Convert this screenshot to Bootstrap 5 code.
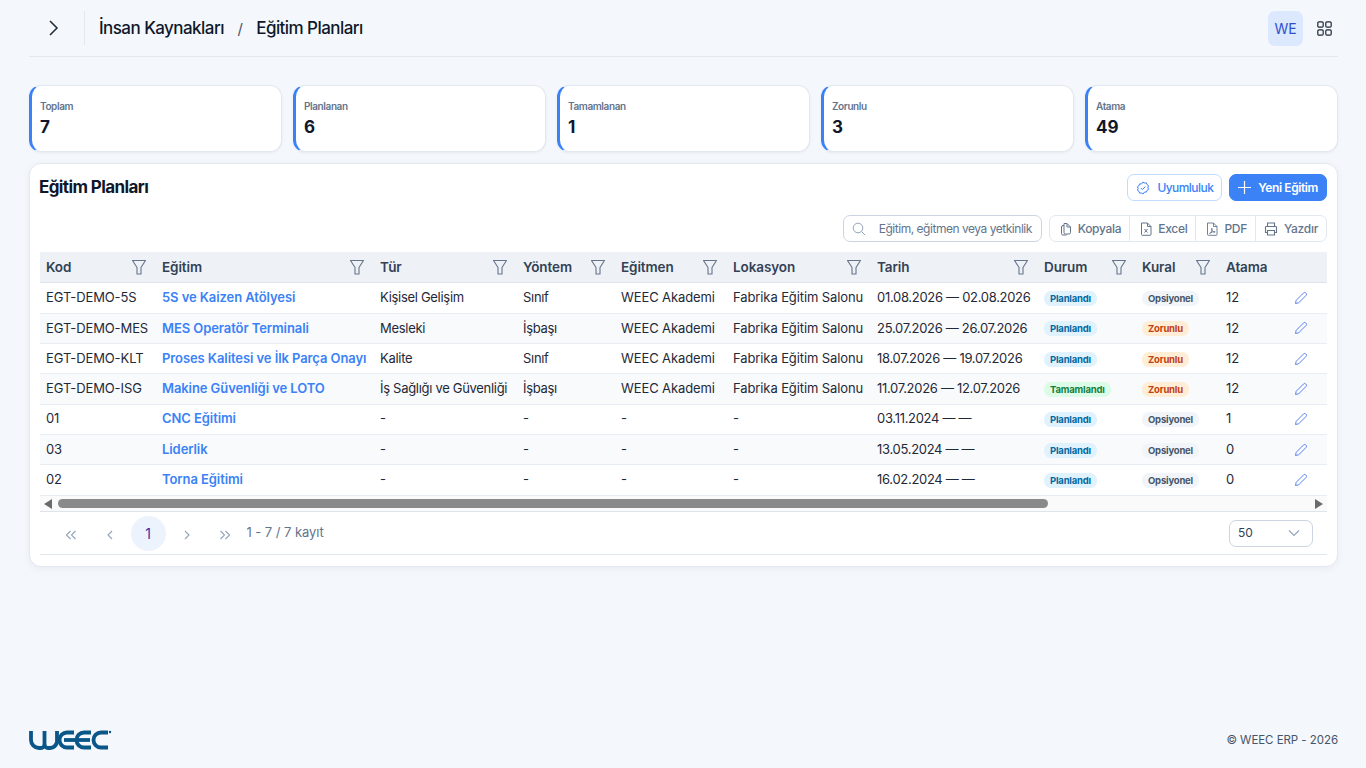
<!DOCTYPE html>
<html lang="tr">
<head>
  <meta charset="UTF-8">
  <title>Eğitim Planları</title>
  <meta name="viewport" content="width=device-width, initial-scale=1">
  <link href="https://cdn.jsdelivr.net/npm/bootstrap@5.3.0/dist/css/bootstrap.min.css" rel="stylesheet">
  <style>
    body { background: #f4f7fc; font-family: Inter, "Liberation Sans", sans-serif; color: #1f2937; font-size: 13px; letter-spacing: -.1px; }
    .page-wrap { padding: 0 28px 0 29px; min-height: 768px; }
    .top-strip { height: 57px; border-bottom: 1px solid #e2e8f0; }
    .toggle-box { width: 56px; height: 34px; border-right: 1px solid #e2e8f0; margin-right: 14px; padding-right: 8px; color: #1f2937; }
    .crumb { font-size: 17px; font-weight: 500; color: #0f172a; letter-spacing: -.55px; position: relative; top: 1px; }
    .crumb-sep { margin: 0 13.5px; font-size: 15px; color: #475569; position: relative; top: 1px; }
    .user-box { width: 35px; height: 35px; border-radius: 7px; background: #dbe8fd; color: #2f4fd0; font-size: 14px; font-weight: 400; }
    .apps-box { width: 15px; margin: 0 6px 0 14px; color: #1f2937; }
    .stat-row { margin-top: 28px; gap: 11px; }
    .stat-box { flex: 1 1 0; height: 67px; background: #fff; border: 1px solid #e2e8f0; border-left: 3px solid #3b82f6; border-radius: 12px; padding: 14px 8px; box-shadow: 0 1px 3px rgba(15, 23, 42, .06); }
    .stat-name { font-size: 10px; font-weight: 600; color: #64748b; line-height: 13px; letter-spacing: -.4px; }
    .stat-num { font-size: 17px; font-weight: 700; color: #0f172a; line-height: 24px; letter-spacing: 0; margin-top: 2px; }
    .main-box { margin-top: 11px; background: #fff; border: 1px solid #e2e8f0; border-radius: 12px; padding: 10px 10px 11px; box-shadow: 0 2px 8px rgba(15, 23, 42, .05); }
    .main-title { font-size: 17px; font-weight: 700; color: #0f172a; letter-spacing: -.6px; margin: 0 0 0 -1px; }
    .btn-soft, .btn-fill { height: 27px; border-radius: 7px; font-size: 12px; padding: 0 8px; gap: 7px; }
    .btn-soft { background: #fff; border: 1px solid #bfdbfe; color: #3b82f6; font-weight: 500; letter-spacing: -.55px; }
    .btn-fill { background: #3b82f6; border: 1px solid #3b82f6; color: #fff; font-weight: 600; letter-spacing: -.4px; }
    .head-actions { gap: 7px; }
    .tools-row { margin-top: 14px; gap: 7px; }
    .search-box { width: 199px; height: 27px; border: 1px solid #cbd5e1; border-radius: 7px; padding: 0 8px; gap: 13px; font-size: 12px; color: #64748b; letter-spacing: -.47px; white-space: nowrap; overflow: hidden; }
    .tool-group { height: 27px; border: 1px solid #e2e8f0; border-radius: 7px; }
    .tool-btn { height: 100%; padding: 0 8px 0 10px; gap: 6px; font-size: 12px; font-weight: 500; color: #64748b; border-right: 1px solid #e2e8f0; letter-spacing: -.3px; background: none; border-top: 0; border-bottom: 0; border-left: 0; }
    .tool-btn:last-child { border-right: 0; padding-left: 8px; }
    .plan-table { margin: 10px 0 0; width: 1287px; table-layout: fixed; border-collapse: collapse; font-size: 13px; }
    .plan-table col:nth-child(1) { width: 116px; }
    .plan-table col:nth-child(2) { width: 218px; }
    .plan-table col:nth-child(3) { width: 143px; }
    .plan-table col:nth-child(4) { width: 98px; }
    .plan-table col:nth-child(5) { width: 112px; }
    .plan-table col:nth-child(6) { width: 144px; }
    .plan-table col:nth-child(7) { width: 167px; }
    .plan-table col:nth-child(8) { width: 98px; }
    .plan-table col:nth-child(9) { width: 84px; }
    .plan-table col:nth-child(10) { width: 60px; }
    .plan-table col:nth-child(11) { width: 47px; }
    .plan-table th { background: #eef2f7; height: 30.78px; padding: 0 9px 0 6px; font-size: 13.5px; font-weight: 600; color: #334155; border-bottom: 1px solid #dde4ee; letter-spacing: -.1px; white-space: nowrap; }
    .plan-table td { height: 30.33px; padding: 0 6px; color: #1f2937; border-bottom: 1px solid #e8edf3; background: #fff; white-space: nowrap; vertical-align: middle; }
    .plan-table tbody tr:nth-child(even) td { background: #f8fafc; }
    .plan-table a { color: #3b82f6; font-weight: 600; text-decoration: none; letter-spacing: -.08px; }
    .plan-table td.date-cell, .plan-table td.tight-cell { letter-spacing: -.3px; }
    .filter-ico { color: #64748b; }
    .tag { display: inline-block; font-size: 9.5px; font-weight: 700; line-height: 15px; padding: 0 6px; border-radius: 7px; letter-spacing: -.2px; vertical-align: middle; }
    .tag-plan { background: #e0f2fe; color: #0369a1; }
    .tag-done { background: #dcfce7; color: #15803d; }
    .tag-opt { background: #f1f5f9; color: #475569; }
    .tag-req { background: #ffedd5; color: #c2410c; }
    .edit-ico { color: #5b82f0; display: block; margin-left: auto; margin-right: 12px; }
    .scroll-strip { height: 16px; width: 1287px; margin-top: .6px; background: #fafafa; border-bottom: 1px solid #dde4ee; padding: 0 4px; }
    .scroll-thumb { height: 9px; width: 990px; background: #8a8a8a; border-radius: 5px; margin-left: 6px; }
    .arrow-l, .arrow-r { width: 0; height: 0; border-top: 5px solid transparent; border-bottom: 5px solid transparent; }
    .arrow-l { border-right: 8px solid #6b6b6b; }
    .arrow-r { border-left: 8px solid #6b6b6b; margin-left: auto; }
    .pager-row { width: 1287px; height: 43px; border-bottom: 1px solid #e2e8f0; padding: 0 14px 0 13.5px; }
    .pager-btn { width: 35px; height: 35px; margin-right: 3.6px; border-radius: 50%; color: #94a3b8; background: none; border: 0; font-size: 14px; padding: 0; }
    .pager-btn.is-on { background: #edf3fd; color: #3730a3; }
    .pager-info { color: #64748b; font-size: 13px; letter-spacing: -.05px; }
    .size-box { width: 84px; height: 27px; border: 1px solid #cbd5e1; border-radius: 7px; padding: 0 12px 0 8px; font-size: 12px; color: #334155; }
    .foot-row { margin-top: auto; height: 47px; padding-bottom: 7px; font-size: 11.5px; color: #475569; letter-spacing: -.05px; }
    .foot-logo { margin: 0 0 2px -1px; }
  </style>
</head>
<body>
  <svg width="0" height="0" class="position-absolute">
    <symbol id="i-filter" viewBox="0 0 16 16"><path d="M1.5 1.5h13L10 8.5V15H6V8.5z" fill="none" stroke="currentColor" stroke-width="1.1" stroke-linejoin="round"/></symbol>
    <symbol id="i-edit" viewBox="0 0 16 16"><path d="M2.5 13.5l.7-3.2 7.4-7.4a1.5 1.5 0 0 1 2.1 0l.4.4a1.5 1.5 0 0 1 0 2.1l-7.400 7.400z" fill="none" stroke="currentColor" stroke-width="1" stroke-linejoin="round"/></symbol>
    <symbol id="i-first" viewBox="0 0 14 14"><path d="M6.5 3 2.5 7l4 4M11.5 3l-4 4 4 4" fill="none" stroke="currentColor" stroke-width="1.1"/></symbol>
    <symbol id="i-prev" viewBox="0 0 14 14"><path d="M9 3 5 7l4 4" fill="none" stroke="currentColor" stroke-width="1.1"/></symbol>
    <symbol id="i-next" viewBox="0 0 14 14"><path d="m5 3 4 4-4 4" fill="none" stroke="currentColor" stroke-width="1.1"/></symbol>
    <symbol id="i-last" viewBox="0 0 14 14"><path d="m2.5 3 4 4-4 4M7.5 3l4 4-4 4" fill="none" stroke="currentColor" stroke-width="1.1"/></symbol>
  </svg>

  <div class="page-wrap d-flex flex-column">
    <header class="top-strip d-flex align-items-center">
      <div class="toggle-box d-flex align-items-center justify-content-center">
        <svg width="16" height="16" viewBox="0 0 16 16"><path d="m5 1 7 7-7 7" fill="none" stroke="#1f2937" stroke-width="1.5"/></svg>
      </div>
      <span class="crumb">İnsan Kaynakları</span>
      <span class="crumb-sep">/</span>
      <span class="crumb">Eğitim Planları</span>
      <div class="ms-auto d-flex align-items-center">
        <div class="user-box d-flex align-items-center justify-content-center">WE</div>
        <div class="apps-box">
          <svg width="15" height="15" viewBox="0 0 15 15" class="d-block"><g fill="none" stroke="#1f2937" stroke-width="1.2"><rect x=".8" y=".8" width="5.4" height="5.4" rx="1.2"/><rect x="8.8" y=".8" width="5.4" height="5.4" rx="1.2"/><rect x=".8" y="8.8" width="5.4" height="5.4" rx="1.2"/><rect x="8.8" y="8.8" width="5.4" height="5.4" rx="1.2"/></g></svg>
        </div>
      </div>
    </header>

    <section class="stat-row d-flex">
      <div class="stat-box"><div class="stat-name">Toplam</div><div class="stat-num">7</div></div>
      <div class="stat-box"><div class="stat-name">Planlanan</div><div class="stat-num">6</div></div>
      <div class="stat-box"><div class="stat-name">Tamamlanan</div><div class="stat-num">1</div></div>
      <div class="stat-box"><div class="stat-name">Zorunlu</div><div class="stat-num">3</div></div>
      <div class="stat-box"><div class="stat-name">Atama</div><div class="stat-num">49</div></div>
    </section>

    <main class="main-box">
      <div class="d-flex align-items-center justify-content-between">
        <h1 class="main-title">Eğitim Planları</h1>
        <div class="head-actions d-flex">
          <button class="btn-soft d-inline-flex align-items-center" type="button">
            <svg width="14" height="14" viewBox="0 0 14 14"><path d="M7 1l1.5 1 1.9-.1.6 1.7 1.5 1.1-.6 1.8.6 1.8-1.5 1.1-.6 1.7-1.9-.1L7 13l-1.500-1-1.900.1L3 10.400 1.500 9.300l.6-1.800-.6-1.800L3 4.600l.6-1.700 1.900.1z" fill="none" stroke="#3b82f6" stroke-width="1"/><path d="m4.800 7 1.600 1.600 2.800-3" fill="none" stroke="#3b82f6" stroke-width="1"/></svg>
            Uyumluluk
          </button>
          <button class="btn-fill d-inline-flex align-items-center" type="button">
            <svg width="13" height="13" viewBox="0 0 13 13"><path d="M6.5 0v13M0 6.5h13" stroke="#fff" stroke-width="1.2"/></svg>
            Yeni Eğitim
          </button>
        </div>
      </div>

      <div class="tools-row d-flex justify-content-end">
        <div class="search-box d-flex align-items-center">
          <svg width="14" height="14" viewBox="0 0 14 14" class="flex-shrink-0"><circle cx="6" cy="6" r="4.8" fill="none" stroke="#94a3b8" stroke-width="1"/><path d="m9.5 9.5 3.5 3.5" stroke="#94a3b8" stroke-width="1"/></svg>
          <span>Eğitim, eğitmen veya yetkinlik</span>
        </div>
        <div class="tool-group d-flex">
          <button class="tool-btn d-flex align-items-center" type="button">
            <svg width="12" height="14" viewBox="0 0 12 14"><path d="M4 1.5h3l3.5 3.5v5.500a1.500 1.500 0 0 1-1.500 1.500H5.500A1.500 1.500 0 0 1 4 10.500zM7 1.500V5h3.500M4 3.500H3A1.500 1.500 0 0 0 1.500 5v6.500A1.500 1.500 0 0 0 3 13h3.500" fill="none" stroke="#64748b" stroke-width="1"/></svg>
            Kopyala
          </button>
          <button class="tool-btn d-flex align-items-center" type="button">
            <svg width="12" height="14" viewBox="0 0 12 14"><path d="M1.5 1h6L11 4.500v8a.8.800 0 0 1-.8.800H2.300a.8.800 0 0 1-.8-.800zM7.500 1v3.500H11M4.500 7l3 3.500M7.500 7l-3 3.500" fill="none" stroke="#64748b" stroke-width="1"/></svg>
            Excel
          </button>
          <button class="tool-btn d-flex align-items-center" type="button">
            <svg width="12" height="14" viewBox="0 0 12 14"><path d="M1.5 1h6L11 4.500v8a.8.800 0 0 1-.8.800H2.300a.8.800 0 0 1-.8-.800zM7.500 1v3.500H11M3.500 11.500c1.500-.8 2.800-3 2.600-4.800-.1-.8-.8-.5-.6.300.4 1.800 1.700 3.200 3.200 3.300.7 0 .6-.8-.1-.8-1.500 0-3.400.8-5.100 2z" fill="none" stroke="#64748b" stroke-width=".9"/></svg>
            PDF
          </button>
          <button class="tool-btn d-flex align-items-center" type="button">
            <svg width="14" height="14" viewBox="0 0 14 14"><path d="M3.5 4.500V1h7v3.500M3.500 10.500H1.500V5.300a.8.800 0 0 1 .8-.800h9.400a.8.800 0 0 1 .8.800v5.200h-2M3.500 8.500h7V13h-7z" fill="none" stroke="#64748b" stroke-width="1.1"/></svg>
            Yazdır
          </button>
        </div>
      </div>

      <table class="plan-table">
        <colgroup>
          <col><col><col><col><col><col><col><col><col><col><col>
        </colgroup>
        <thead>
          <tr>
            <th><div class="d-flex justify-content-between align-items-center">Kod<svg class="filter-ico" width="16" height="16"><use href="#i-filter"/></svg></div></th>
            <th><div class="d-flex justify-content-between align-items-center">Eğitim<svg class="filter-ico" width="16" height="16"><use href="#i-filter"/></svg></div></th>
            <th><div class="d-flex justify-content-between align-items-center">Tür<svg class="filter-ico" width="16" height="16"><use href="#i-filter"/></svg></div></th>
            <th><div class="d-flex justify-content-between align-items-center">Yöntem<svg class="filter-ico" width="16" height="16"><use href="#i-filter"/></svg></div></th>
            <th><div class="d-flex justify-content-between align-items-center">Eğitmen<svg class="filter-ico" width="16" height="16"><use href="#i-filter"/></svg></div></th>
            <th><div class="d-flex justify-content-between align-items-center">Lokasyon<svg class="filter-ico" width="16" height="16"><use href="#i-filter"/></svg></div></th>
            <th><div class="d-flex justify-content-between align-items-center">Tarih<svg class="filter-ico" width="16" height="16"><use href="#i-filter"/></svg></div></th>
            <th><div class="d-flex justify-content-between align-items-center">Durum<svg class="filter-ico" width="16" height="16"><use href="#i-filter"/></svg></div></th>
            <th><div class="d-flex justify-content-between align-items-center">Kural<svg class="filter-ico" width="16" height="16"><use href="#i-filter"/></svg></div></th>
            <th>Atama</th>
            <th></th>
          </tr>
        </thead>
        <tbody>
          <tr><td>EGT-DEMO-5S</td><td><a href="#">5S ve Kaizen Atölyesi</a></td><td class="tight-cell">Kişisel Gelişim</td><td class="tight-cell">Sınıf</td><td>WEEC Akademi</td><td>Fabrika Eğitim Salonu</td><td class="date-cell">01.08.2026 — 02.08.2026</td><td><span class="tag tag-plan">Planlandı</span></td><td><span class="tag tag-opt">Opsiyonel</span></td><td>12</td><td><svg class="edit-ico" width="16" height="16"><use href="#i-edit"/></svg></td></tr>
          <tr><td>EGT-DEMO-MES</td><td><a href="#">MES Operatör Terminali</a></td><td class="tight-cell">Mesleki</td><td class="tight-cell">İşbaşı</td><td>WEEC Akademi</td><td>Fabrika Eğitim Salonu</td><td class="date-cell">25.07.2026 — 26.07.2026</td><td><span class="tag tag-plan">Planlandı</span></td><td><span class="tag tag-req">Zorunlu</span></td><td>12</td><td><svg class="edit-ico" width="16" height="16"><use href="#i-edit"/></svg></td></tr>
          <tr><td>EGT-DEMO-KLT</td><td><a href="#">Proses Kalitesi ve İlk Parça Onayı</a></td><td class="tight-cell">Kalite</td><td class="tight-cell">Sınıf</td><td>WEEC Akademi</td><td>Fabrika Eğitim Salonu</td><td class="date-cell">18.07.2026 — 19.07.2026</td><td><span class="tag tag-plan">Planlandı</span></td><td><span class="tag tag-req">Zorunlu</span></td><td>12</td><td><svg class="edit-ico" width="16" height="16"><use href="#i-edit"/></svg></td></tr>
          <tr><td>EGT-DEMO-ISG</td><td><a href="#">Makine Güvenliği ve LOTO</a></td><td class="tight-cell">İş Sağlığı ve Güvenliği</td><td class="tight-cell">İşbaşı</td><td>WEEC Akademi</td><td>Fabrika Eğitim Salonu</td><td class="date-cell">11.07.2026 — 12.07.2026</td><td><span class="tag tag-done">Tamamlandı</span></td><td><span class="tag tag-req">Zorunlu</span></td><td>12</td><td><svg class="edit-ico" width="16" height="16"><use href="#i-edit"/></svg></td></tr>
          <tr><td>01</td><td><a href="#">CNC Eğitimi</a></td><td>-</td><td>-</td><td>-</td><td>-</td><td class="date-cell">03.11.2024 — —</td><td><span class="tag tag-plan">Planlandı</span></td><td><span class="tag tag-opt">Opsiyonel</span></td><td>1</td><td><svg class="edit-ico" width="16" height="16"><use href="#i-edit"/></svg></td></tr>
          <tr><td>03</td><td><a href="#">Liderlik</a></td><td>-</td><td>-</td><td>-</td><td>-</td><td class="date-cell">13.05.2024 — —</td><td><span class="tag tag-plan">Planlandı</span></td><td><span class="tag tag-opt">Opsiyonel</span></td><td>0</td><td><svg class="edit-ico" width="16" height="16"><use href="#i-edit"/></svg></td></tr>
          <tr><td>02</td><td><a href="#">Torna Eğitimi</a></td><td>-</td><td>-</td><td>-</td><td>-</td><td class="date-cell">16.02.2024 — —</td><td><span class="tag tag-plan">Planlandı</span></td><td><span class="tag tag-opt">Opsiyonel</span></td><td>0</td><td><svg class="edit-ico" width="16" height="16"><use href="#i-edit"/></svg></td></tr>
        </tbody>
      </table>

      <div class="scroll-strip d-flex align-items-center">
        <div class="arrow-l"></div>
        <div class="scroll-thumb"></div>
        <div class="arrow-r"></div>
      </div>

      <div class="pager-row d-flex align-items-center">
        <button class="pager-btn" type="button"><svg width="14" height="14"><use href="#i-first"/></svg></button>
        <button class="pager-btn" type="button"><svg width="14" height="14"><use href="#i-prev"/></svg></button>
        <button class="pager-btn is-on" type="button">1</button>
        <button class="pager-btn" type="button"><svg width="14" height="14"><use href="#i-next"/></svg></button>
        <button class="pager-btn" type="button"><svg width="14" height="14"><use href="#i-last"/></svg></button>
        <span class="pager-info">1 - 7 / 7 kayıt</span>
        <div class="size-box ms-auto d-flex align-items-center justify-content-between">
          50
          <svg width="12" height="12" viewBox="0 0 12 12"><path d="m1 3.5 5 5 5-5" fill="none" stroke="#94a3b8" stroke-width="1.1"/></svg>
        </div>
      </div>
    </main>

    <footer class="foot-row d-flex align-items-center justify-content-between">
      <svg class="foot-logo" width="84" height="22" viewBox="0 0 84 22" aria-label="WEEC">
        <g fill="none" stroke="#0a5688" stroke-width="3.8">
          <path d="M3 2v9a8 8 0 0 0 8 8h2a3.5 3.5 0 0 0 3.5-3.5V2"/>
          <path d="M16.5 15.5A3.5 3.5 0 0 0 20 19h2a8 8 0 0 0 7-6V2"/>
          <path d="M46 3.5h-7a7.5 7.5 0 0 0 0 15h7"/>
          <path d="M63 3.5h-7a7.5 7.5 0 0 0 0 15h7"/>
          <path d="M36 11h26"/>
          <path d="M80 3.5h-7a7.5 7.5 0 0 0 0 15h7"/>
        </g>
        <circle cx="82" cy="3" r="1.2" fill="#0a5688"/>
      </svg>
      <span>© WEEC ERP - 2026</span>
    </footer>
  </div>

  <script src="https://cdn.jsdelivr.net/npm/bootstrap@5.3.0/dist/js/bootstrap.bundle.min.js"></script>
</body>
</html>
